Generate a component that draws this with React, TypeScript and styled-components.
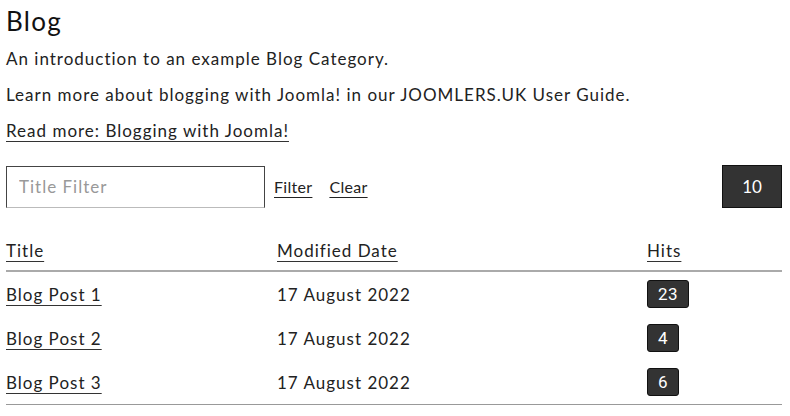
import styled, { createGlobalStyle } from "styled-components";

const GlobalStyle = createGlobalStyle`
    html, body {
        margin: 0;
        padding: 0;
        background: #ffffff;
    }
    body {
        font-family: Lato, "Liberation Sans", sans-serif;
        color: #222222;
    }
`;

const posts = [
    { id: 1, title: "Blog Post 1", date: "17 August 2022", hits: 23 },
    { id: 2, title: "Blog Post 2", date: "17 August 2022", hits: 4 },
    { id: 3, title: "Blog Post 3", date: "17 August 2022", hits: 6 },
];

const App = () => {
    return (
        <>
            <GlobalStyle />
            <Page>
                <Title>Blog</Title>
                <Text>An introduction to an example Blog Category.</Text>
                <Text>Learn more about blogging with Joomla! in our JOOMLERS.UK User Guide.</Text>
                <Text><TextLink href="#">Read more: Blogging with Joomla!</TextLink></Text>

                <Toolbar>
                    <FilterInput placeholder="Title Filter" />
                    <ToolLinks>
                        <ToolLink href="#">Filter</ToolLink>
                        <ToolLink href="#">Clear</ToolLink>
                    </ToolLinks>
                    <Spacer />
                    <LimitBox>10</LimitBox>
                </Toolbar>

                <Table>
                    <colgroup>
                        <col style={{ width: 271 }} />
                        <col style={{ width: 370 }} />
                        <col />
                    </colgroup>
                    <thead>
                        <tr>
                            <Th scope="col"><TextLink href="#">Title</TextLink></Th>
                            <Th scope="col"><TextLink href="#">Modified Date</TextLink></Th>
                            <Th scope="col"><TextLink href="#">Hits</TextLink></Th>
                        </tr>
                    </thead>
                    <tbody>
                        {posts.map((post) => (
                            <tr key={post.id}>
                                <Td><TextLink href="#">{post.title}</TextLink></Td>
                                <Td>{post.date}</Td>
                                <Td><Badge>{post.hits}</Badge></Td>
                            </tr>
                        ))}
                    </tbody>
                </Table>
            </Page>
        </>
    );
};

export default App;

const Page = styled.div`
    padding: 5px 8px 0 6px;
    letter-spacing: 1px;
`;

const Title = styled.h1`
    margin: 0 0 10px;
    font-size: 26px;
    font-weight: 400;
    line-height: 32px;
    letter-spacing: 1.3px;
    color: #111111;
`;

const Text = styled.p`
    margin: 0 0 12px;
    font-size: 17px;
    line-height: 24px;
    color: #222222;
`;

const TextLink = styled.a`
    color: #222222;
    text-decoration: underline;
    text-decoration-color: #333333;
    text-underline-offset: 4px;
`;

const Toolbar = styled.div`
    display: flex;
    align-items: center;
    gap: 9px;
    margin-top: 22px;
`;

const FilterInput = styled.input`
    width: 259px;
    height: 42px;
    box-sizing: border-box;
    padding: 0 12px;
    border: 1px solid #444444;
    border-bottom-color: #bbbbbb;
    font-family: Lato, "Liberation Sans", sans-serif;
    font-size: 17px;
    letter-spacing: 1px;
    color: #222222;
    outline: none;

    &::placeholder {
        color: #999999;
    }
`;

const ToolLinks = styled.div`
    display: flex;
    gap: 17px;
`;

const ToolLink = styled.a`
    font-size: 16px;
    letter-spacing: 0.3px;
    color: #222222;
    text-decoration: underline;
    text-underline-offset: 4px;
`;

const Spacer = styled.div`
    flex: 1;
`;

const LimitBox = styled.div`
    width: 60px;
    height: 43px;
    box-sizing: border-box;
    display: flex;
    align-items: center;
    justify-content: center;
    background: #333333;
    border: 1px solid #111111;
    color: #ffffff;
    font-size: 17px;
    letter-spacing: 0;
`;

const Table = styled.table`
    width: 776px;
    margin-top: 21px;
    border-collapse: collapse;
    table-layout: fixed;
    border-bottom: 1px solid #999999;
`;

const Th = styled.th`
    padding: 9px 0 7px;
    height: 42px;
    box-sizing: border-box;
    text-align: left;
    font-size: 17px;
    font-weight: 400;
    border-bottom: 2px solid #aaaaaa;
`;

const Td = styled.td`
    height: 44px;
    padding: 0;
    font-size: 17px;
    color: #222222;
`;

const Badge = styled.span`
    display: inline-block;
    padding: 3px 10px;
    border-radius: 3px;
    border: 1px solid #111111;
    background: #333333;
    color: #ffffff;
    font-family: Roboto, "Liberation Sans", sans-serif;
    font-size: 17px;
    line-height: 20px;
    letter-spacing: 0.5px;
`;
